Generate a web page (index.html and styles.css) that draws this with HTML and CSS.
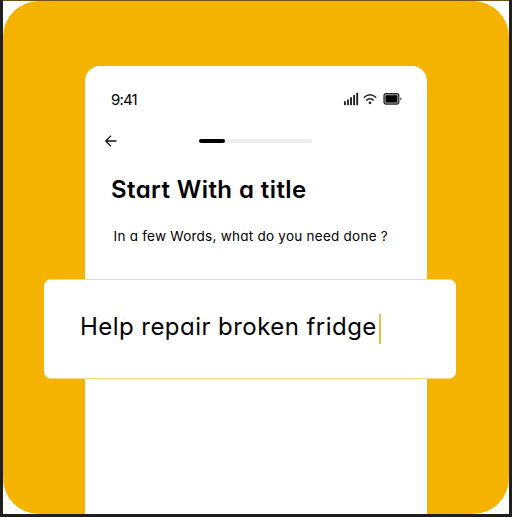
FILE: index.html
```html
<!DOCTYPE html>
<html lang="en">
<head>
<meta charset="utf-8">
<title>Start With a title</title>
<link rel="stylesheet" href="styles.css">
</head>
<body>
<div class="frame">
  <main class="stage">
    <section class="phone">
      <header class="status">
        <span class="time">9:41</span>
        <span class="indicators">
          <svg width="16" height="14" viewBox="0 0 16 14"><path d="M1.9 9.9v2.5M4.9 8.2v4.2M8 6v6.4M11.1 3.7v8.7M14.2 1.6v10.8" fill="none" stroke="#222" stroke-width="1.9" stroke-linecap="round"/></svg>
          <svg width="14" height="14" viewBox="0 0 14 14"><path d="M1.3 5.3Q7 .3 12.7 5.3M3.8 8.1Q7 5.5 10.2 8.1" fill="none" stroke="#222" stroke-width="1.5" stroke-linecap="round"/><circle cx="7" cy="10.8" r="1.4" fill="#222"/></svg>
          <svg width="20" height="14" viewBox="0 0 20 14"><rect x="1" y="1.6" width="14.8" height="10.5" rx="2" fill="#aaa" stroke="#222" stroke-width="1.2"/><rect x="2.6" y="3.2" width="11.6" height="7.3" rx=".8" fill="#000"/><path d="M17.4 5.2q2.1 1.6 0 3.3z" fill="#222"/></svg>
        </span>
      </header>
      <nav class="nav">
        <svg width="12" height="12" viewBox="0 0 12 12"><path d="M11 6H.8M5.6 1.1.8 6l4.8 4.9" fill="none" stroke="#111" stroke-width="1.3" stroke-linecap="round" stroke-linejoin="round"/></svg>
        <div class="progress"><div class="progress-fill"></div></div>
      </nav>
      <h1 class="title">Start With a title</h1>
      <p class="subtitle">In a few Words, what do you need done ?</p>
      <div class="field"><span class="value">Help repair broken fridge</span><span class="caret"></span></div>
    </section>
  </main>
</div>
</body>
</html>
```
FILE: styles.css
```css
* { box-sizing: border-box; }
body {
  margin: 0;
  background: #211f1e;
  color: #000;
  font-family: Inter, "Open Sans", sans-serif;
  font-feature-settings: "cv11" 1;
  white-space: nowrap;
}
.frame {
  width: 506px;
  height: 514px;
  margin: 0 0 0 3px;
  border-top: 1px solid #735018;
  background: #fff;
}
.stage {
  height: 513px;
  padding: 65px 82.5px 0 82px;
  border-radius: 36px;
  background: #f5b301;
}
.phone {
  display: flex;
  flex-direction: column;
  height: 448px;
  border-radius: 15px 15px 0 0;
  background: #fff;
}
.status {
  display: flex;
  align-items: center;
  justify-content: space-between;
  height: 66px;
  padding: 0 23.5px 0 26px;
}
.time {
  font-size: 15px;
  letter-spacing: -0.8px;
}
.indicators {
  display: flex;
  gap: 3.5px;
}
.indicators svg:last-child {
  margin-left: 3px;
}
.nav {
  display: flex;
  align-items: center;
  height: 18px;
  padding-left: 20px;
}
.progress {
  width: 113px;
  height: 4px;
  margin-left: 82px;
  border-radius: 2px;
  background: #ededed;
}
.progress-fill {
  width: 26px;
  height: 4px;
  border-radius: 2px;
  background: #000;
}
.title {
  margin: 24px 0 0 26px;
  font-size: 24px;
  line-height: 32px;
  font-weight: 600;
  letter-spacing: 0.42px;
}
.subtitle {
  margin: 19.5px 0 0 28.5px;
  font-size: 13.5px;
  line-height: 20px;
  letter-spacing: 0.25px;
}
.field {
  display: flex;
  align-items: center;
  height: 100px;
  margin: 33.5px -29px 0 -41px;
  padding-left: 36px;
  border: solid #f7dc83;
  border-width: 1px 0;
  border-radius: 7px;
  background: #fff;
}
.value {
  font-size: 24px;
  line-height: 30px;
  margin-top: -4px;
  letter-spacing: 0.45px;
}
.caret {
  width: 2px;
  height: 30px;
  margin: -1px 0 0 2px;
  background: #e6bd42;
}
```
